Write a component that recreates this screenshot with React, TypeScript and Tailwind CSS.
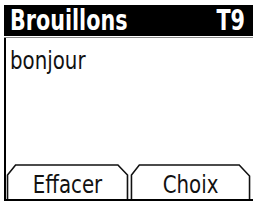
import React from "react";

const cond = { fontFamily: '"DejaVu Sans Condensed", "DejaVu Sans", sans-serif' } as React.CSSProperties;

function Tab({ label, variant }: { label: string; variant: "left" | "right" }) {
  return (
    <div className="relative flex-1 h-full flex items-end justify-center pb-[3px]">
      <svg className="absolute inset-0 w-full h-full" viewBox={variant === "left" ? "0 0 122 36" : "0 0 125 36"} preserveAspectRatio="none">
        {variant === "left" ? (
          <path d="M1.5 36 V12 L9.5 2 H111 L120.5 12 V36" fill="none" stroke="#111" strokeWidth="1.6" />
        ) : (
          <path d="M2.5 36 V12 L10.5 2 H112 L122.5 13 V36" fill="none" stroke="#111" strokeWidth="1.6" />
        )}
      </svg>
      <span className="relative inline-block scale-y-110 text-[22px] leading-none text-[#111]" style={cond}>{label}</span>
    </div>
  );
}

export default function App() {
  return (
    <div className="w-[253px] h-[201px] bg-white flex flex-col overflow-hidden">
      <div className="mt-[5px] ml-[4px] h-[31px] bg-black flex items-center justify-between pl-[6px] pr-[8px]">
        <span className="inline-block scale-y-120 text-white font-bold text-[23px] leading-none" style={cond}>Brouillons</span>
        <span className="inline-block scale-y-120 text-white font-bold text-[23px] leading-none" style={cond}>T9</span>
      </div>
      <div className="ml-[4px] h-[1px] mt-[1px] bg-[#8a8a8a]" />
      <div className="ml-[4px] flex-1 border-l-2 border-black flex flex-col">
        <div className="flex-1 pl-[4px] pt-[12px]">
          <span className="inline-block scale-y-110 text-[22px] leading-none text-[#111]" style={cond}>bonjour</span>
        </div>
        <div className="h-[36px] flex pr-[1px]">
          <Tab label="Effacer" variant="left" />
          <Tab label="Choix" variant="right" />
        </div>
        <div className="h-[2px] bg-black" />
      </div>
    </div>
  );
}
